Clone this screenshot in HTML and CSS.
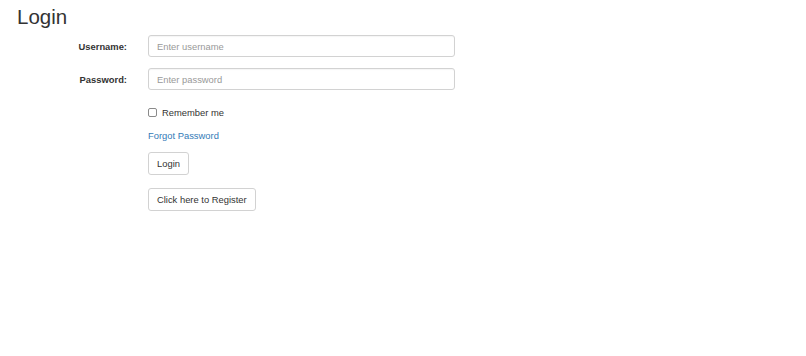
FILE: index.html
```html
<!DOCTYPE html>
<html lang="en">
<head>
<meta charset="UTF-8" />
<meta name="viewport" content="width=device-width, initial-scale=1.0"/>
<title>Login</title>
<link rel="stylesheet" href="styles.css">
</head>
<body>

<div class="container">
  <h2>Login</h2>

  <form class="login-form">
    <div class="form-group">
      <label for="username">Username:</label>
      <input type="text" id="username" placeholder="Enter username" />
    </div>

    <div class="form-group">
      <label for="password">Password:</label>
      <input type="password" id="password" placeholder="Enter password" />
    </div>

    <div class="form-group offset remember">
      <div class="checkbox">
        <input type="checkbox" id="remember" />
        <span>Remember me</span>
      </div>
    </div>

    <div class="form-group offset forgot">
      <a href="#" class="link">Forgot Password</a>
    </div>

    <div class="form-group offset actions">
      <button type="button" class="btn">Login</button>
    </div>

    <div class="form-group offset">
      <button type="button" class="btn">Click here to Register</button>
    </div>
  </form>
</div>

</body>
</html>
```

FILE: styles.css
```css
body {
  font-family: "Liberation Sans", Arial, sans-serif;
  font-size: 9.4px;
  line-height: 13px;
  color: #333;
  background: #fff;
  margin: 0;
  padding: 0;
}

.container {
  padding: 0 17px;
}

h2 {
  font-size: 20.5px;
  font-weight: normal;
  line-height: 22px;
  margin: 6px 0 7px;
}

.form-group {
  display: flex;
  align-items: center;
  margin-bottom: 11px;
}

.form-group label {
  width: 110px;
  margin-right: 21px;
  text-align: right;
  font-weight: bold;
}

.form-group.offset {
  padding-left: 131px;
}

.form-group.remember {
  margin-bottom: 10px;
}

.form-group.forgot {
  margin-bottom: 10px;
}

.form-group.actions {
  margin-bottom: 13px;
}

input[type="text"],
input[type="password"] {
  width: 307px;
  height: 22px;
  box-sizing: border-box;
  border: 1px solid #d2d2d2;
  border-radius: 3px;
  padding: 0 8px;
  font-family: inherit;
  font-size: 9.4px;
  color: #555;
  box-shadow: inset 0 1px 1px rgba(0,0,0,0.04);
}

input::placeholder {
  color: #999;
}

.checkbox {
  display: flex;
  align-items: center;
  padding-top: 5px;
}

input[type="checkbox"] {
  appearance: none;
  width: 9px;
  height: 9px;
  margin: 0 5px 0 0;
  border: 1px solid #8a8a8a;
  border-radius: 2px;
  background: #fff;
}

.link {
  color: #337ab7;
  text-decoration: none;
}

.btn {
  height: 23px;
  box-sizing: border-box;
  padding: 0 8px;
  background: #fff;
  border: 1px solid #d2d2d2;
  border-radius: 3px;
  font-family: inherit;
  font-size: 9.4px;
  color: #333;
  cursor: pointer;
}

.btn:hover {
  background: #e6e6e6;
}
```
